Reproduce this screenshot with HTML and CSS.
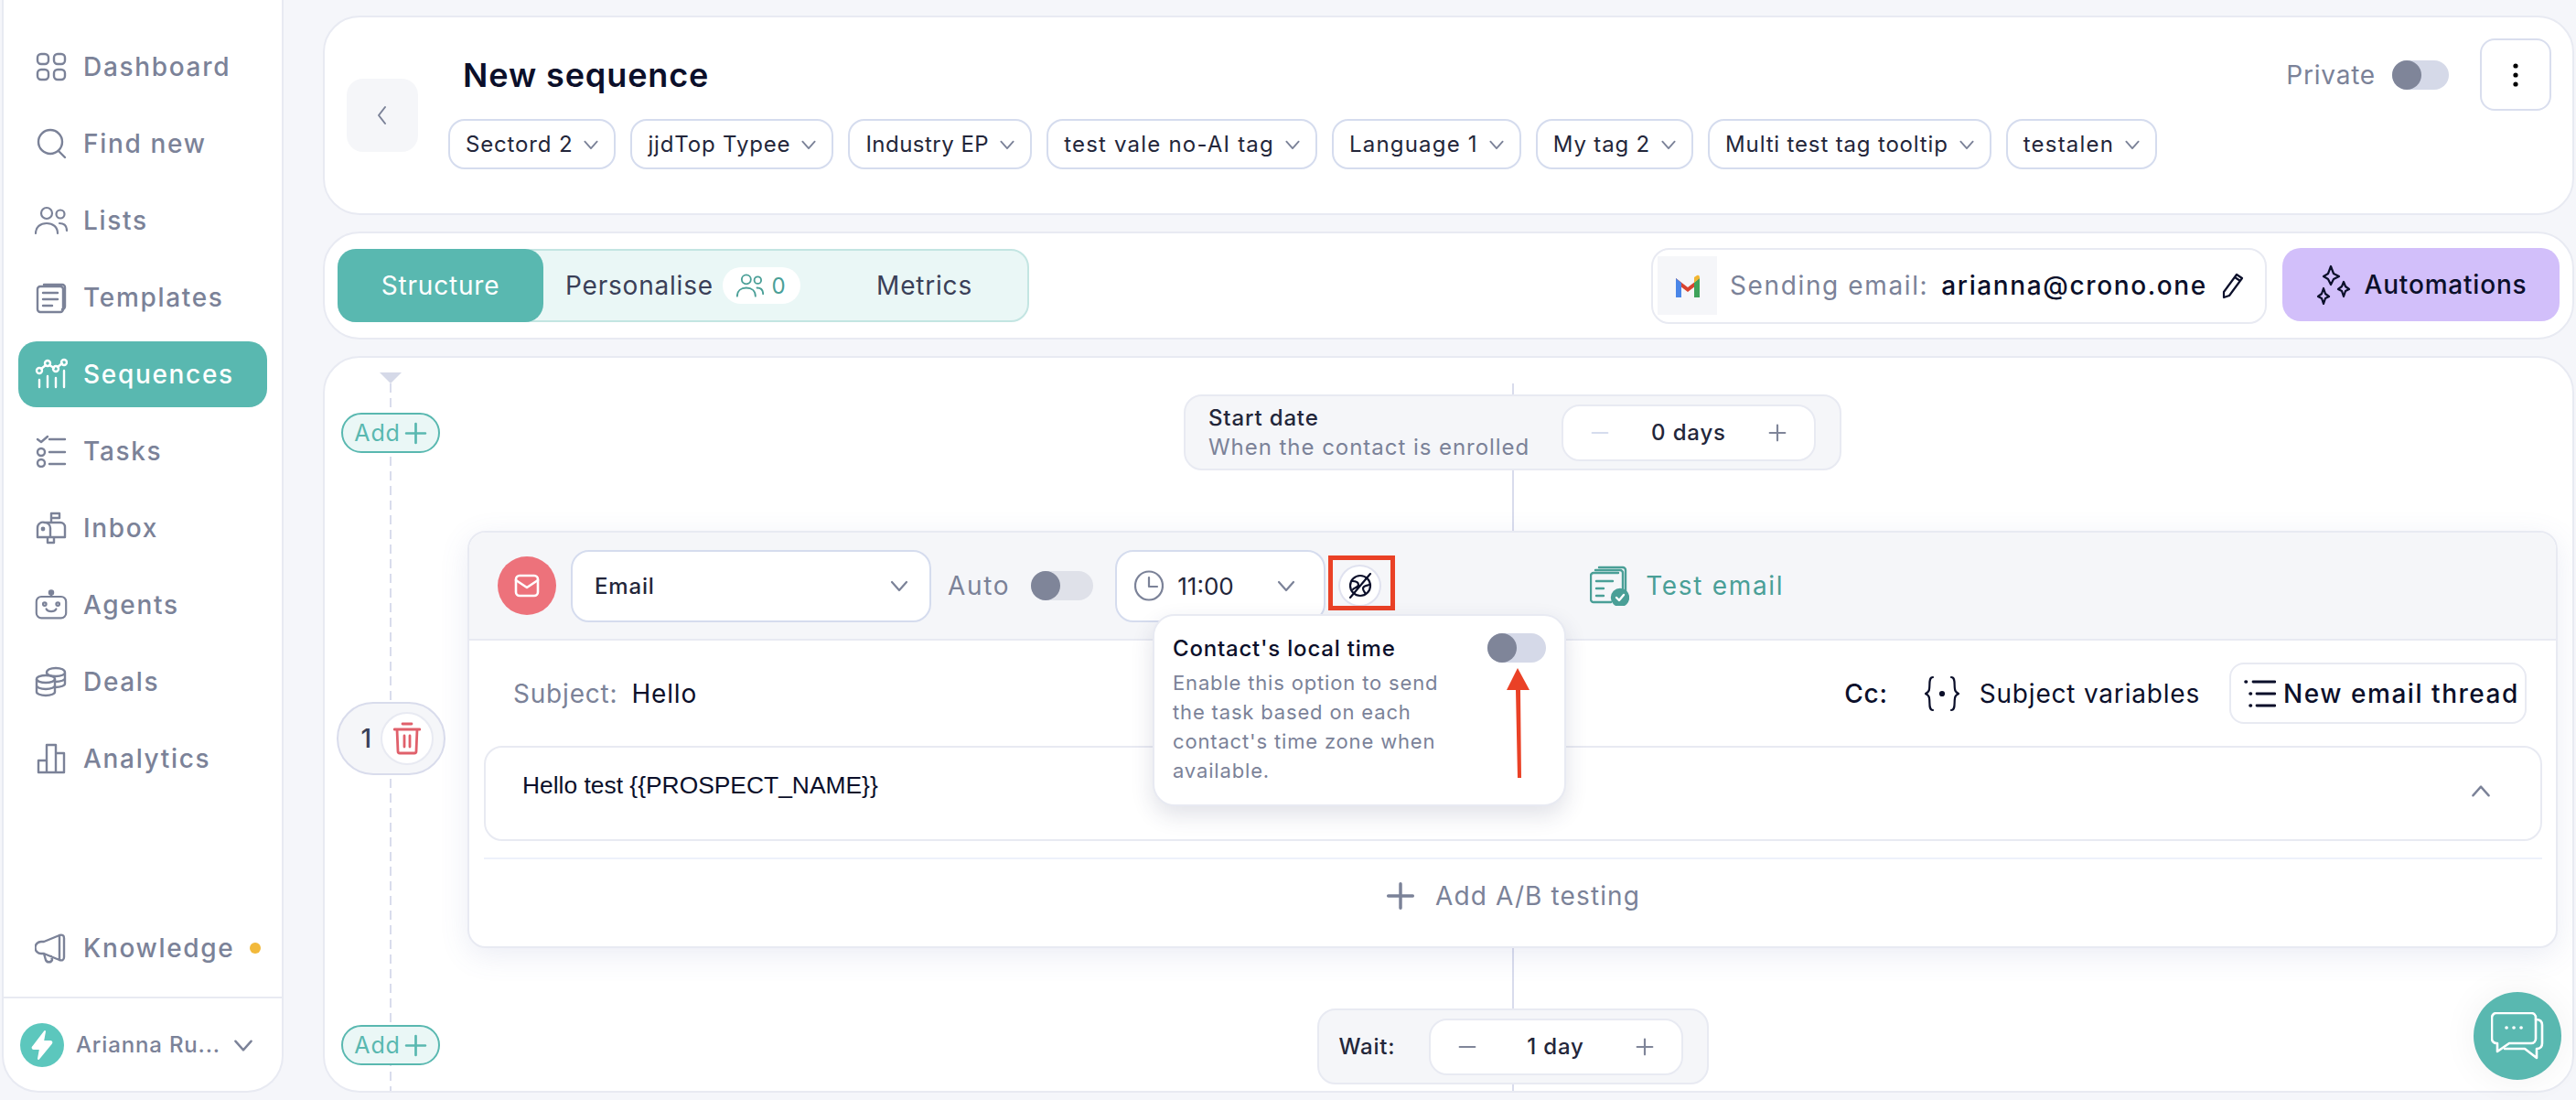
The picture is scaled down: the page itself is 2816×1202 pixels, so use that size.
FILE: index.html
```html
<!DOCTYPE html>
<html lang="en">
<head>
  <meta charset="UTF-8" />
  <title>New sequence</title>
  <link rel="stylesheet" href="styles.css">
</head>
<body>

<svg class="sprite" width="0" height="0">
  <symbol id="chev" viewBox="0 0 24 24"><path d="M4 8l8 9 8-9" fill="none" stroke="currentColor" stroke-width="2.2" stroke-linecap="round" stroke-linejoin="round"/></symbol>
  <symbol id="plus" viewBox="0 0 24 24"><path d="M12 2v20M2 12h20" fill="none" stroke="currentColor" stroke-width="2.6" stroke-linecap="round"/></symbol>
  <symbol id="minus" viewBox="0 0 24 24"><path d="M2 12h20" fill="none" stroke="currentColor" stroke-width="2.6" stroke-linecap="round"/></symbol>
  <symbol id="users" viewBox="0 0 36 32" fill="none" stroke="currentColor" stroke-width="2.2" stroke-linecap="round"><circle cx="13" cy="8" r="6"/><circle cx="28" cy="9" r="4.5"/><path d="M1 30c0-7 5-11 12-11s12 4 12 11M27 19c5 0 8 3 8 8"/></symbol>
</svg>

<div class="app">

  <aside class="sidebar">
    <nav class="nav">
      <a class="nav-item">
        <svg class="nav-icon" viewBox="0 0 36 36" fill="none" stroke="currentColor" stroke-width="2.4"><rect x="3" y="4" width="12" height="11" rx="4"/><rect x="21" y="4" width="12" height="11" rx="4"/><rect x="3" y="21" width="12" height="11" rx="4"/><rect x="21" y="21" width="12" height="11" rx="4"/></svg>
        Dashboard
      </a>
      <a class="nav-item">
        <svg class="nav-icon" viewBox="0 0 36 36" fill="none" stroke="currentColor" stroke-width="2.4" stroke-linecap="round"><circle cx="17" cy="16" r="13"/><path d="M26 26l7 7"/></svg>
        Find new
      </a>
      <a class="nav-item">
        <svg class="nav-icon" viewBox="0 0 36 36"><use href="#users"/></svg>
        Lists
      </a>
      <a class="nav-item">
        <svg class="nav-icon" viewBox="0 0 36 36" fill="none" stroke="currentColor" stroke-width="2.4" stroke-linejoin="round" stroke-linecap="round"><path d="M10 4h20a3 3 0 0 1 3 3v21a3 3 0 0 1-3 3"/><rect x="3" y="6" width="28" height="28" rx="3"/><path d="M9 13h16M9 20h16M9 27h10"/></svg>
        Templates
      </a>
      <a class="nav-item active">
        <svg class="nav-icon" viewBox="0 0 36 36" fill="none" stroke="currentColor" stroke-width="2.4" stroke-linecap="round"><circle cx="5" cy="14" r="3"/><circle cx="14" cy="6" r="3"/><circle cx="23" cy="12" r="3"/><circle cx="32" cy="5" r="3"/><path d="M7 12l5-4M16 8l5 3M25 10l5-4M5 24v8M14 20v12M23 22v10M32 14v18"/></svg>
        Sequences
      </a>
      <a class="nav-item">
        <svg class="nav-icon" viewBox="0 0 36 36" fill="none" stroke="currentColor" stroke-width="2.4" stroke-linecap="round" stroke-linejoin="round"><path d="M3 5l4 3 7-6M16 5h17M16 19h17M16 32h17"/><circle cx="7" cy="19" r="4"/><circle cx="7" cy="31" r="4"/></svg>
        Tasks
      </a>
      <a class="nav-item">
        <svg class="nav-icon" viewBox="0 0 36 36" fill="none" stroke="currentColor" stroke-width="2.4" stroke-linejoin="round" stroke-linecap="round"><path d="M11 12h17a5 5 0 0 1 5 5v11H3V18a6 6 0 0 1 8-6zM11 12a6 6 0 0 1 6 6v10M18 12V2h9v5h-9M14 28v6h7v-6"/><circle cx="9" cy="19" r="1.2"/></svg>
        Inbox
      </a>
      <a class="nav-item">
        <svg class="nav-icon" viewBox="0 0 40 36" fill="none" stroke="currentColor" stroke-width="2.4" stroke-linecap="round"><rect x="2" y="8" width="36" height="26" rx="6"/><path d="M20 8V4"/><circle cx="20" cy="3" r="2.4" fill="currentColor"/><circle cx="12" cy="17" r="2"/><circle cx="28" cy="17" r="2"/><path d="M14 23c2 4 10 4 12 0"/></svg>
        Agents
      </a>
      <a class="nav-item">
        <svg class="nav-icon" viewBox="0 0 36 36" fill="none" stroke="currentColor" stroke-width="2.4"><ellipse cx="12" cy="15" rx="10" ry="4"/><path d="M2 15v14c0 2 4 4 10 4s10-2 10-4V15M2 22c0 2 4 4 10 4s10-2 10-4"/><path d="M13 8c0-3 4-5 10-5s10 2 10 5v12c0 2-4 4-11 4M33 14c0 2-4 4-11 4M13 8c0 2 4 4 10 4s10-2 10-4"/></svg>
        Deals
      </a>
      <a class="nav-item">
        <svg class="nav-icon" viewBox="0 0 36 36" fill="none" stroke="currentColor" stroke-width="2.4" stroke-linejoin="round"><path d="M4 33V20h9v13zM13 33V3h10v30zM23 33V12h9v21z"/></svg>
        Analytics
      </a>
      <a class="nav-item knowledge">
        <svg class="nav-icon" viewBox="0 0 36 36" fill="none" stroke="currentColor" stroke-width="2.4" stroke-linejoin="round" stroke-linecap="round"><path d="M27 4L10 11H7a5 5 0 0 0 0 13h3l17 7c3 1 5 0 5-3V7c0-3-2-4-5-3zM27 4v27M10 24l2 7c1 3 6 3 7 0l-1-4"/></svg>
        Knowledge
        <span class="dot"></span>
      </a>
    </nav>
    <div class="profile">
      <span class="avatar">
        <svg viewBox="0 0 48 48" width="48" height="48"><path d="M27 9L14 26c-1 1 0 2 1 2h7l-2 11 14-17c1-1 0-2-1-2h-8z" fill="#fff" stroke="#fff" stroke-width="2" stroke-linejoin="round"/></svg>
      </span>
      <span class="profile-name">Arianna Ru...</span>
      <svg class="profile-chev"><use href="#chev"/></svg>
    </div>
  </aside>

  <main class="main">

    <section class="card head">
      <button class="back">
        <svg viewBox="0 0 24 24" width="24" height="24"><path d="M15 3l-7 9 7 9" fill="none" stroke="#7b8298" stroke-width="2" stroke-linecap="round" stroke-linejoin="round"/></svg>
      </button>
      <div class="head-mid">
        <h1 class="title">New sequence</h1>
        <div class="tags">
          <span class="tag">Sectord 2 <svg><use href="#chev"/></svg></span>
          <span class="tag">jjdTop Typee <svg><use href="#chev"/></svg></span>
          <span class="tag narrow">Industry EP <svg><use href="#chev"/></svg></span>
          <span class="tag wide">test vale no-AI tag <svg><use href="#chev"/></svg></span>
          <span class="tag wide">Language 1 <svg><use href="#chev"/></svg></span>
          <span class="tag">My tag 2 <svg><use href="#chev"/></svg></span>
          <span class="tag">Multi test tag tooltip <svg><use href="#chev"/></svg></span>
          <span class="tag wide">testalen <svg><use href="#chev"/></svg></span>
        </div>
      </div>
      <div class="head-right">
        <span class="muted-label">Private</span>
        <span class="toggle"></span>
        <button class="menu-btn">
          <svg viewBox="0 0 8 28" width="8" height="28"><circle cx="4" cy="4" r="2.6"/><circle cx="4" cy="14" r="2.6"/><circle cx="4" cy="24" r="2.6"/></svg>
        </button>
      </div>
    </section>

    <section class="card tabs-bar">
      <div class="tabs">
        <span class="tab active">Structure</span>
        <span class="tab personalise">Personalise
          <span class="count"><svg width="30" height="28"><use href="#users"/></svg>0</span>
        </span>
        <span class="tab metrics">Metrics</span>
      </div>
      <div class="tabs-right">
        <div class="sending">
          <span class="gmail">
            <svg viewBox="0 0 28 28" width="28" height="28"><path d="M1 6l13 10L27 6v5L14 21 1 11z" fill="#d9432f"/><path d="M1 6v21h6V11z" fill="#4a86e8"/><path d="M27 6v21h-6V11z" fill="#3fa35b"/><path d="M21 5l3-2c2-1 3 0 3 3l-6 5z" fill="#f2b632"/></svg>
          </span>
          <span class="sending-label">Sending email:</span>
          <span class="sending-mail">arianna@crono.one</span>
          <svg class="pencil" viewBox="0 0 26 30" width="26" height="30" fill="none" stroke="#0b0f2a" stroke-width="2.2" stroke-linejoin="round"><path d="M3 22L17 3l6 4L9 26l-6 2zM15 6l6 4"/></svg>
        </div>
        <button class="automations">
          <svg viewBox="0 0 40 44" width="40" height="44" fill="none" stroke="#0b0f2a" stroke-width="2.2" stroke-linejoin="round"><path d="M17 2l3 8 6 3-6 3-3 6-3-6-5-3 5-3zM31 19l2 5 4 3-4 2-2 6-2-6-4-2 4-3zM9 26l2 6 4 3-4 2-2 6-2-6-4-2 4-3z"/></svg>
          Automations
        </button>
      </div>
    </section>

    <section class="card canvas">
      <div class="rail">
        <span class="rail-top"></span>
        <button class="add first">Add <svg><use href="#plus"/></svg></button>
        <div class="step-no">
          <span>1</span>
          <span class="trash">
            <svg viewBox="0 0 30 36" width="30" height="36" fill="none" stroke="#e0606b" stroke-width="2.8" stroke-linecap="round" stroke-linejoin="round"><path d="M1 8h28M10 2h10M4 8l1 24c0 1.500 1 2 2 2h16c1 0 2-.5 2-2l1-24M12 15v12M18 15v12"/></svg>
          </span>
        </div>
        <button class="add second">Add <svg><use href="#plus"/></svg></button>
      </div>

      <div class="flow">
        <div class="timing start">
          <div class="timing-text">
            <div class="timing-title">Start date</div>
            <div class="timing-sub">When the contact is enrolled</div>
          </div>
          <div class="stepper">
            <svg class="off"><use href="#minus"/></svg>
            <span>0 days</span>
            <svg><use href="#plus"/></svg>
          </div>
        </div>

        <div class="step">
          <div class="step-head">
            <span class="kind-icon">
              <svg viewBox="0 0 30 30" width="30" height="30" fill="none" stroke="#fff" stroke-width="2.6" stroke-linejoin="round" stroke-linecap="round"><rect x="3" y="4" width="24" height="22" rx="4"/><path d="M3 9l12 8 12-8"/></svg>
            </span>
            <div class="select kind-select">Email <svg><use href="#chev"/></svg></div>
            <span class="muted-label auto">Auto</span>
            <span class="toggle auto-toggle"></span>
            <div class="select time-select">
              <svg class="clock" viewBox="0 0 32 34" width="32" height="34" fill="none" stroke="#7b8298" stroke-width="2.2" stroke-linecap="round" stroke-linejoin="round"><ellipse cx="16" cy="17" rx="15" ry="15.500"/><path d="M16 8v10h9"/></svg>
              <span class="time">11:00</span>
              <svg class="chev"><use href="#chev"/></svg>
            </div>
            <span class="zone-btn">
              <svg viewBox="0 0 28 28" width="28" height="28" fill="none" stroke="#0b0f2a" stroke-width="2.2" stroke-linecap="round"><circle cx="14" cy="14" r="11"/><path d="M25 1L3 27M5 9c4 0 7 1 7 4s-5 3-6 5M24 13c-3 1-7 1-7 4s2 4 3 6"/></svg>
            </span>
            <a class="test-email">
              <svg viewBox="0 0 43 44" width="43" height="44" fill="none" stroke="#4a9f97" stroke-width="2.400" stroke-linejoin="round" stroke-linecap="round"><path d="M10 2h26a3 3 0 0 1 3 3v24"/><path d="M6 5h27a3 3 0 0 1 3 3v20"/><path d="M23 40H4a3 3 0 0 1-3-3V11a3 3 0 0 1 3-3h27"/><path d="M7 17h18M7 25h8M7 33h8"/><circle cx="33" cy="35" r="9" fill="#4a9f97"/><path d="M29 35l3 3 5-6" stroke="#fff"/></svg>
              Test email
            </a>

            <span class="highlight"></span>

            <div class="popover">
              <div class="popover-top">
                <span class="popover-title">Contact's local time</span>
                <span class="toggle pop-toggle"></span>
              </div>
              <p class="popover-text">Enable this option to send the task based on each contact's time zone when available.</p>
            </div>

            <svg class="pointer" viewBox="0 0 40 130" width="40" height="130"><path d="M19 5L7 29h10l2 96h4L22 29h10z" fill="#ea4126"/></svg>
          </div>

          <div class="subject-row">
            <span class="muted-label">Subject:</span>
            <span class="subject-value">Hello</span>
            <span class="cc">Cc:</span>
            <span class="variables">
              <svg viewBox="0 0 38 40" width="38" height="40" fill="none" stroke="#0b0f2a" stroke-width="2.2" stroke-linecap="round"><path d="M9 2C4 2 6 10 5 15c0 3-2 4-4 5 2 1 4 2 4 5 1 5-1 13 4 13M29 2c5 0 3 8 4 13 0 3 2 4 4 5-2 1-4 2-4 5-1 5 1 13-4 13"/><circle cx="19" cy="20" r="2" fill="#0b0f2a"/></svg>
              Subject variables
            </span>
            <button class="thread-btn">
              <svg viewBox="0 0 36 36" width="36" height="36" fill="none" stroke="#0b0f2a" stroke-width="2.800" stroke-linecap="round"><path d="M11 5h24M15 18h20M15 31h20"/><path d="M3 5h.5M8 18h.5M8 31h.5" stroke-width="3.600"/></svg>
              New email thread
            </button>
          </div>

          <div class="editor">
            <span>Hello test {{PROSPECT_NAME}}</span>
            <svg class="chev-up"><use href="#chev"/></svg>
          </div>

          <div class="ab-row">
            <svg width="32" height="32"><use href="#plus"/></svg>
            Add A/B testing
          </div>
        </div>

        <div class="timing wait">
          <span class="wait-label">Wait:</span>
          <div class="stepper">
            <svg><use href="#minus"/></svg>
            <span>1 day</span>
            <svg><use href="#plus"/></svg>
          </div>
        </div>
      </div>
    </section>
  </main>

  <button class="chat">
    <svg viewBox="0 0 58 52" width="58" height="52" fill="none" stroke="#fff" stroke-width="2.6" stroke-linejoin="round" stroke-linecap="round">
      <path d="M6 1h38a5 5 0 0 1 5 5v23a5 5 0 0 1-5 5H20L7 43v-9H6a5 5 0 0 1-5-5V6a5 5 0 0 1 5-5z"/>
      <path d="M49 8c4 0 7 2 7 6v20c0 4-2 6-6 6v10L37 40H15"/>
      <path d="M17 17h.1M25 17h.1M33 17h.1" stroke-width="3.600"/>
    </svg>
  </button>

</div>

</body>
</html>
```

FILE: styles.css
```css
html, body {
  margin: 0; padding: 0; height: 100%;
  font-family: 'Inter', 'Liberation Sans', sans-serif;
  letter-spacing: 0.05em;
  background: #f5f6fa; color: #0b0f2a; overflow: hidden;
}
button { font: inherit; letter-spacing: inherit; color: inherit; cursor: pointer; }
.sprite { position: absolute; }

.app {
  position: relative;
  display: flex;
  height: 1202px;
  box-sizing: border-box;
  padding: 0 0 8px 2px;
}

/* sidebar */
.sidebar {
  width: 308px; flex: none;
  box-sizing: border-box;
  display: flex; flex-direction: column;
  background: #fff;
  border: 2px solid #e8eaf2; border-top: none;
  border-radius: 0 0 40px 40px;
}
.nav {
  flex: 1;
  display: flex; flex-direction: column; gap: 12px;
  padding: 37px 16px 17px;
}
.nav-item {
  height: 72px; flex: none;
  display: flex; align-items: center; gap: 17px;
  padding-left: 18px;
  border-radius: 20px;
  font-size: 28px; font-weight: 500;
  letter-spacing: 0.06em;
  color: #7b8298;
}
.nav-item.active { background: #59b8b0; color: #fff; }
.nav-icon { width: 36px; height: 36px; flex: none; }
.knowledge { margin-top: auto; position: relative; }
.dot {
  width: 12px; height: 12px; border-radius: 50%;
  background: #f2b93b;
  margin-left: auto; margin-right: 7px;
}
.profile {
  height: 103px; flex: none;
  box-sizing: border-box;
  display: flex; align-items: center;
  padding-left: 18px;
  border-top: 2px solid #e8eaf2;
  color: #7b8298;
}
.avatar {
  width: 48px; height: 48px; flex: none;
  border-radius: 50%; background: #5cc7bd;
}
.avatar svg { display: block; }
.profile-name { margin-left: 13px; font-size: 24px; font-weight: 500; white-space: nowrap; letter-spacing: 0.035em; }
.profile-chev { width: 26px; height: 26px; margin-left: auto; margin-right: 29px; }

/* right side */
.main {
  flex: 1; min-width: 0;
  display: flex; flex-direction: column; gap: 18px;
  padding: 17px 2px 0 43px;
}
.card {
  box-sizing: border-box;
  background: #fff;
  border: 2px solid #e8eaf2;
  border-radius: 40px;
}

.head {
  height: 218px; flex: none;
  display: flex; align-items: center;
  padding: 0 23px 0 24px;
}
.back {
  width: 78px; height: 80px; flex: none;
  display: flex; align-items: center; justify-content: center;
  background: #f5f6f9; border: none; border-radius: 18px;
}
.head-mid { align-self: flex-start; margin-left: 33px; padding-top: 41px; }
.title {
  margin: 0 0 26px 16px;
  font-size: 36px; line-height: 44px; font-weight: 600;
  letter-spacing: 0.025em;
}
.tags { display: flex; gap: 16px; }
.tag {
  height: 55px;
  box-sizing: border-box;
  display: flex; align-items: center; gap: 10px;
  padding: 0 15px 0 17px;
  border: 2px solid #d5dcee; border-radius: 18px;
  font-size: 24px; color: #23263a;
  letter-spacing: 0.035em;
  white-space: nowrap;
}
.tag.wide { letter-spacing: 0.05em; }
.tag.narrow { letter-spacing: 0.02em; }
.tag svg { width: 20px; height: 20px; color: #7b8298; }
.head-right {
  align-self: flex-start; margin: 23px 0 0 auto;
  display: flex; align-items: center;
}
.muted-label { font-size: 28px; color: #7b8298; }
.toggle {
  display: block;
  width: 62px; height: 32px; flex: none;
  background: #d5d9e8; border-radius: 16px;
  position: relative;
}
.toggle::before {
  content: ""; position: absolute; left: 0; top: 0;
  width: 32px; height: 32px; border-radius: 50%;
  background: #7f8599;
}
.head-right .toggle { margin-left: 18px; }
.menu-btn {
  width: 78px; height: 79px; margin-left: 34px;
  display: flex; align-items: center; justify-content: center;
  background: #fff; border: 2px solid #d9deee; border-radius: 16px;
}

.tabs-bar {
  height: 118px; flex: none;
  display: flex; align-items: center; justify-content: space-between;
  padding: 0 14px;
}
.tabs {
  width: 756px; height: 80px;
  box-sizing: border-box;
  display: flex; align-items: center;
  background: #eaf7f6;
  border: 2px solid #c3e5e2; border-radius: 20px;
  font-size: 28px; color: #3a4058;
}
.tab { display: flex; align-items: center; }
.tab.active {
  width: 225px; height: 80px; margin-left: -2px;
  justify-content: center;
  background: #59b8b0; color: #fff;
  border-radius: 20px;
}
.personalise { margin-left: 24px; gap: 10px; }
.count {
  width: 85px; height: 40px;
  display: flex; align-items: center; justify-content: center; gap: 8px;
  background: #fff; border-radius: 20px;
  color: #4a9f97; font-size: 24px;
}
.metrics { margin-left: auto; margin-right: 60px; }
.tabs-right { display: flex; align-items: flex-start; gap: 17px; }
.sending {
  width: 673px; height: 83px;
  box-sizing: border-box;
  display: flex; align-items: center;
  padding-left: 5px;
  background: #fff;
  border: 2px solid #e8eaf2; border-radius: 20px;
  font-size: 28px;
  letter-spacing: 0.058em;
}
.gmail {
  width: 65px; height: 64px; flex: none;
  display: flex; align-items: center; justify-content: center;
  background: #f5f6f9;
}
.sending-label { margin-left: 14px; color: #7b8298; }
.sending-mail { margin-left: 14px; font-weight: 500; }
.pencil { margin-left: 15px; }
.automations {
  width: 303px; height: 80px;
  display: flex; align-items: center; justify-content: center; gap: 14px;
  background: #d2bffa;
  border: none; border-radius: 20px;
  font-size: 28px; font-weight: 500;
}

.canvas {
  flex: 1; min-height: 0;
  display: flex; gap: 12px;
  padding-right: 16px;
  overflow: hidden;
}
.rail {
  position: relative;
  width: 144px; flex: none;
  display: flex; flex-direction: column; align-items: center;
}
.rail::before {
  content: ""; position: absolute; left: 50%; top: 28px; bottom: 0;
  width: 2px; margin-left: -1px;
  background: repeating-linear-gradient(#d9dcec 0 10px, transparent 10px 16px);
}
.rail-top {
  width: 0; height: 0; margin-top: 16px;
  border-left: 12px solid transparent;
  border-right: 12px solid transparent;
  border-top: 12px solid #d5d9e8;
}
.add {
  position: relative;
  width: 108px; height: 44px;
  display: flex; align-items: center; justify-content: center; gap: 4px;
  padding: 0;
  background: #eaf7f6;
  border: 2px solid #59b8b0; border-radius: 22px;
  color: #59b8b0; font-size: 25px;
}
.add svg { width: 25px; height: 25px; }
.add.first { margin-top: 32px; }
.add.second { margin-top: 273px; }
.step-no {
  position: relative;
  width: 119px; height: 80px; margin-top: 272px;
  box-sizing: border-box;
  display: flex; align-items: center; justify-content: space-between;
  padding: 0 11px 0 25px;
  background: #f5f6f9;
  border: 2px solid #d9dcec; border-radius: 40px;
  font-size: 28px; font-weight: 500; color: #3a4058;
}
.trash {
  width: 58px; height: 58px;
  box-sizing: border-box;
  display: flex; align-items: center; justify-content: center;
  background: #fff;
  border: 2px solid #e8eaf2; border-radius: 50%;
}

.flow {
  flex: 1; min-width: 0;
  position: relative;
  display: flex; flex-direction: column; align-items: center;
  padding-top: 40px;
}
.flow::before {
  content: ""; position: absolute; left: 50%; top: 28px; bottom: 0;
  width: 2px; margin-left: -1px;
  background: #d9dcec;
}
.timing {
  position: relative;
  height: 83px; flex: none;
  box-sizing: border-box;
  display: flex; align-items: center;
  background: #f5f6f9;
  border: 2px solid #e8eaf2; border-radius: 20px;
}
.start { width: 719px; padding: 0 26px 0 25px; justify-content: space-between; }
.wait { width: 428px; margin-top: 66px; padding: 0 26px 0 22px; justify-content: space-between; }
.timing-title { font-size: 24px; line-height: 32px; font-weight: 500; color: #23263a; letter-spacing: 0.035em; }
.timing-sub { font-size: 24px; line-height: 32px; color: #7b8298; letter-spacing: 0.04em; }
.wait-label { font-size: 24px; font-weight: 500; color: #23263a; }
.stepper {
  width: 278px; height: 62px;
  box-sizing: border-box;
  display: flex; align-items: center; justify-content: space-between;
  padding: 0 30px;
  background: #fff;
  border: 2px solid #e8eaf2; border-radius: 20px;
  font-size: 24px; font-weight: 500; color: #23263a;
  letter-spacing: 0.035em;
}
.stepper svg { width: 20px; height: 20px; color: #7f8599; }
.stepper svg.off { color: #d5dcee; }

.step {
  position: relative;
  width: 100%; margin-top: 66px;
  box-sizing: border-box;
  background: #fff;
  border: 2px solid #e8eaf2; border-radius: 20px;
  box-shadow: 0 8px 32px rgba(90, 110, 170, 0.12);
}
.step-head {
  position: relative;
  height: 118px;
  box-sizing: border-box;
  display: flex; align-items: center;
  padding-left: 31px;
  background: #f5f6f9;
  border-bottom: 2px solid #e8eaf2;
  border-radius: 18px 18px 0 0;
}
.kind-icon {
  width: 64px; height: 64px; flex: none;
  display: flex; align-items: center; justify-content: center;
  background: #ed727b; border-radius: 50%;
}
.select {
  height: 79px;
  box-sizing: border-box;
  display: flex; align-items: center;
  background: #fff;
  border: 2px solid #d5dcee; border-radius: 20px;
  font-size: 24px; font-weight: 500; color: #23263a;
  letter-spacing: 0.035em;
}
.select svg { flex: none; }
.kind-select {
  width: 394px; margin-left: 16px;
  padding: 0 21px 0 24px;
  justify-content: space-between;
}
.select > svg:last-child { width: 24px; height: 24px; color: #7b8298; }
.auto { margin-left: 18px; letter-spacing: 0.06em; }
.auto-toggle { width: 68px; margin-left: 23px; background: #dfe1e9; }
.time-select { width: 230px; margin-left: 24px; padding-left: 19px; }
.time { margin-left: 15px; font-size: 26px; font-weight: 400; letter-spacing: 0; }
.time-select .chev { margin-left: auto; margin-right: 29px; }
.zone-btn {
  width: 47px; height: 46px; margin-left: 14px; flex: none;
  box-sizing: border-box;
  display: flex; align-items: center; justify-content: center;
  background: #fff;
  border: 2px solid #e0e2ef; border-radius: 50%;
}
.test-email {
  display: flex; align-items: center; gap: 18px;
  margin-left: 228px;
  font-size: 28px; color: #4a9f97;
  letter-spacing: 0.06em;
}
.highlight {
  position: absolute; left: 939px; top: 25px;
  width: 73px; height: 60px;
  box-sizing: border-box;
  border: 5px solid #ea4126;
}
.popover {
  position: absolute; left: 747px; top: 89px; z-index: 2;
  width: 452px; height: 210px;
  box-sizing: border-box;
  padding: 19px 20px 0 20px;
  background: #fff;
  border: 2px solid #e8eaf2; border-radius: 24px;
  box-shadow: 0 10px 24px rgba(40, 50, 90, 0.14);
}
.popover-top { display: flex; align-items: center; justify-content: space-between; }
.popover-title { font-size: 24px; font-weight: 500; }
.pop-toggle { width: 64px; }
.popover-text {
  width: 320px; margin: 6px 0 0;
  font-size: 22px; line-height: 32px; color: #7b8298;
  letter-spacing: 0.038em;
}
.pointer { position: absolute; left: 1127px; top: 143px; z-index: 3; }

.subject-row {
  height: 115px;
  box-sizing: border-box;
  display: flex; align-items: center;
  padding: 0 32px 0 48px;
  font-size: 28px;
}
.subject-value { margin-left: 15px; letter-spacing: 0.03em; }
.cc { margin-left: auto; font-weight: 500; }
.variables { display: flex; align-items: center; gap: 22px; margin-left: 40px; }
.thread-btn {
  width: 325px; height: 67px; margin-left: 32px;
  display: flex; align-items: center; gap: 8px;
  padding: 0 0 0 13px;
  background: #fff;
  border: 2px solid #e8eaf2; border-radius: 16px;
  font-size: 28px; font-weight: 500;
  letter-spacing: 0.055em;
}
.editor {
  height: 104px; margin: 0 15px 0 16px;
  box-sizing: border-box;
  display: flex; align-items: center; justify-content: space-between;
  padding: 0 52px 17px 40px;
  border: 2px solid #e8eaf2; border-radius: 20px;
  font-family: 'Liberation Sans', sans-serif; font-size: 26.4px;
  letter-spacing: 0;
}
.chev-up { width: 26px; height: 26px; margin-top: 12px; color: #7b8298; transform: rotate(180deg); }
.ab-row {
  height: 80px; margin: 18px 15px 15px 16px;
  display: flex; align-items: center; justify-content: center; gap: 22px;
  border-top: 2px solid #edf1fb;
  font-size: 28px; color: #7b8298;
  letter-spacing: 0.04em;
}

.chat {
  position: absolute; right: 16px; bottom: 22px;
  width: 96px; height: 96px;
  display: flex; align-items: center; justify-content: center;
  padding: 0;
  background: #59b8b0;
  border: none; border-radius: 50%;
  box-shadow: 0 0 40px rgba(0, 0, 0, 0.06);
}
```
